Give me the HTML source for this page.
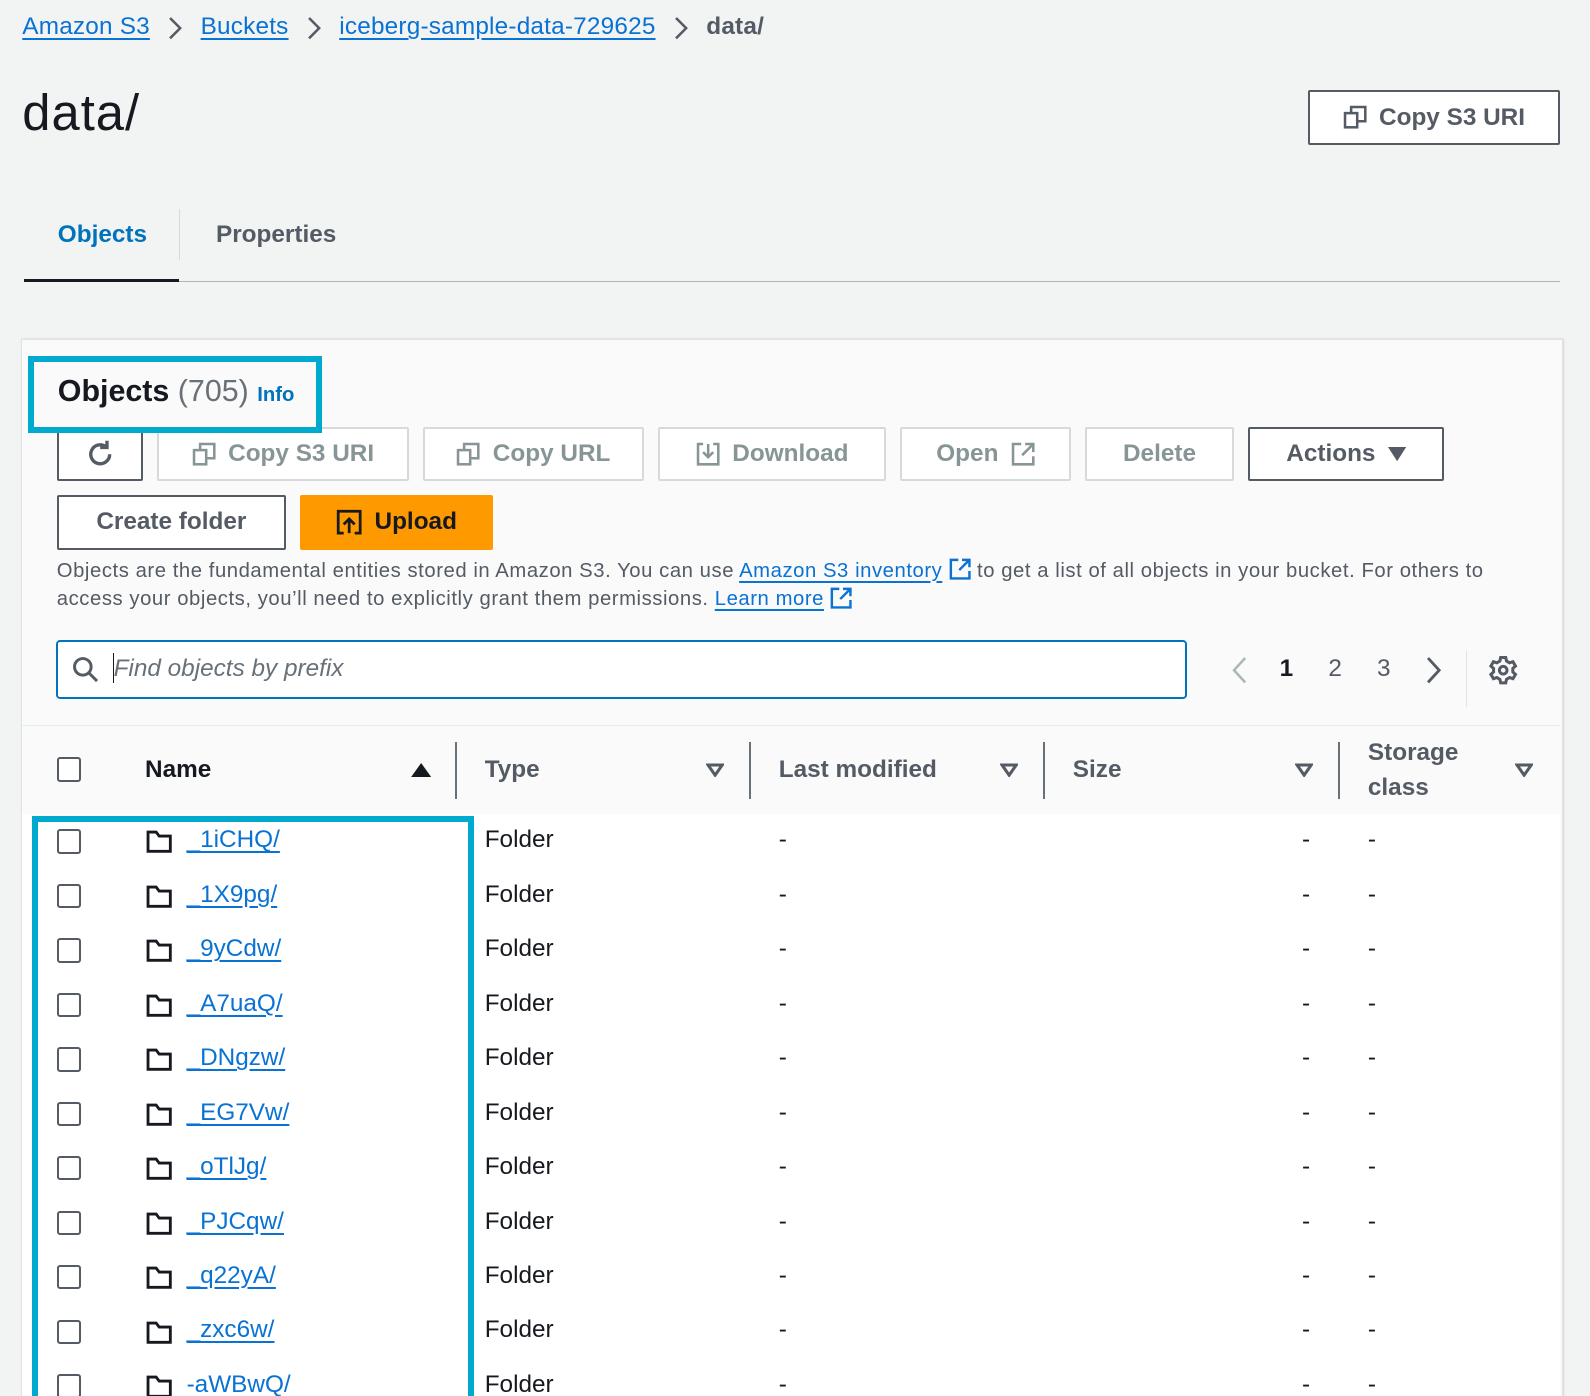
<!DOCTYPE html>
<html><head><meta charset="utf-8"><style>
html,body{margin:0;padding:0;background:#f2f3f3;overflow:hidden;width:1590px;height:1396px}
#w{zoom:1.014;position:relative;width:1568px;height:1377px;font-family:"Liberation Sans",sans-serif;color:#16191f}
.a{position:absolute;white-space:nowrap}
.lnk{color:#0972d3;text-decoration:underline;text-underline-offset:4px}
.btn{position:absolute;border:2px solid #d5dbdb;border-radius:2px;background:#fff;color:#879596;font-weight:bold;font-size:24px;box-sizing:border-box;display:flex;align-items:center;justify-content:center;gap:12px}
.btn.on{border-color:#545b64;color:#545b64}
.cb{position:absolute;left:56px;width:24px;height:24px;border:2px solid #545b64;border-radius:3px;background:#fff;box-sizing:border-box}
.row{position:absolute;left:22px;width:1516px;height:54px;border-bottom:1px solid #eaeded;background:#fff}
.hd{position:absolute;font-size:24px;font-weight:bold;color:#545b64}
.sep{position:absolute;width:2px;background:#687078;top:732px;height:56px}
.tri{position:absolute;top:752px}
.chev{display:inline-block;vertical-align:middle;margin:0 18px}
</style></head><body><div id="w">
<div class="a" style="left:22px;top:13px;font-size:24px;letter-spacing:0.2px"><span class="lnk">Amazon S3</span><svg class="chev" width="14" height="24" viewBox="0 0 14 24"><path d="M2 2l10 10L2 22" fill="none" stroke="#545b64" stroke-width="2.5"/></svg><span class="lnk">Buckets</span><svg class="chev" width="14" height="24" viewBox="0 0 14 24"><path d="M2 2l10 10L2 22" fill="none" stroke="#545b64" stroke-width="2.5"/></svg><span class="lnk">iceberg-sample-data-729625</span><svg class="chev" width="14" height="24" viewBox="0 0 14 24"><path d="M2 2l10 10L2 22" fill="none" stroke="#545b64" stroke-width="2.5"/></svg><span style="color:#545b64;font-weight:bold">data/</span></div>
<div class="a" style="left:22px;top:82px;font-size:50px;letter-spacing:1px">data/</div>
<div class="btn on" style="left:1290px;top:89px;width:248px;height:54px;color:#545b64"><svg width="24" height="24" viewBox="0 0 24 24" fill="none" stroke="#545b64" stroke-width="2.5"><rect x="2" y="8" width="12" height="14"/><path d="M8 8V2h14v14h-8"/></svg>Copy S3 URI</div>
<div class="a" style="left:57px;top:218px;font-size:24px;font-weight:bold;color:#0073bb">Objects</div>
<div class="a" style="left:177px;top:206px;width:1px;height:50px;background:#d5dbdb"></div>
<div class="a" style="left:213px;top:218px;font-size:24px;font-weight:bold;color:#545b64">Properties</div>
<div class="a" style="left:24px;top:277px;width:1514px;height:1px;background:#aab7b8"></div>
<div class="a" style="left:24px;top:275px;width:153px;height:3px;background:#16191f"></div>
<div class="a" style="left:21px;top:334px;width:1518px;height:1100px;background:#fafafa;border:1px solid #e1e4e4;box-shadow:1px 0 2px #ccc"></div>
<div class="a" style="left:57px;top:369px;font-size:30px;font-weight:bold">Objects <span style="font-weight:normal;color:#687078">(705)</span> <span style="font-size:20px;color:#0073bb">Info</span></div>
<div class="btn on" style="left:56px;top:421px;width:85px;height:53px"><svg width="32" height="32" viewBox="0 0 24 24" fill="none" stroke="#545b64" stroke-width="2.5"><path d="M19 12a7 7 0 1 1-3-5.7"/><path d="M17 2v5h-5"/></svg></div>
<div class="btn" style="left:155px;top:421px;width:248px;height:53px"><svg width="24" height="24" viewBox="0 0 24 24" fill="none" stroke="#879596" stroke-width="2.5"><rect x="2" y="8" width="12" height="14"/><path d="M8 8V2h14v14h-8"/></svg>Copy S3 URI</div>
<div class="btn" style="left:417px;top:421px;width:218px;height:53px"><svg width="24" height="24" viewBox="0 0 24 24" fill="none" stroke="#879596" stroke-width="2.5"><rect x="2" y="8" width="12" height="14"/><path d="M8 8V2h14v14h-8"/></svg>Copy URL</div>
<div class="btn" style="left:649px;top:421px;width:225px;height:53px"><svg width="24" height="24" viewBox="0 0 24 24" fill="none" stroke="#879596" stroke-width="2.5"><path d="M7 2H2v20h20V2h-5M12 2v12M7 10l5 5 5-5"/></svg>Download</div>
<div class="btn" style="left:888px;top:421px;width:168px;height:53px">Open <svg width="24" height="24" viewBox="0 0 24 24" fill="none" stroke="#879596" stroke-width="2.5"><path d="M10 2H2v20h20v-8M14 2h8v8M22 2L11 13"/></svg></div>
<div class="btn" style="left:1070px;top:421px;width:147px;height:53px">Delete</div>
<div class="btn on" style="left:1231px;top:421px;width:193px;height:53px">Actions <svg width="18" height="14" viewBox="0 0 18 14"><path d="M0 0h18L9 14z" fill="#545b64"/></svg></div>
<div class="btn on" style="left:56px;top:488px;width:226px;height:54px">Create folder</div>
<div class="btn" style="left:296px;top:488px;width:190px;height:54px;background:#ff9900;border-color:#ff9900;color:#16191f"><svg width="26" height="26" viewBox="0 0 24 24" fill="none" stroke="#16191f" stroke-width="2.5"><path d="M7 22H2V2h20v20h-5M12 22V9M7 14l5-5 5 5"/></svg>Upload</div>
<div class="a" style="left:56px;top:549px;font-size:20px;line-height:28px;color:#545b64;letter-spacing:0.55px">Objects are the fundamental entities stored in Amazon S3. You can use <span class="lnk">Amazon S3 inventory</span> <svg width="22" height="22" viewBox="0 0 24 24" style="vertical-align:-4px" fill="none" stroke="#0972d3" stroke-width="2.6"><path d="M10 2H2v20h20v-8M14 2h8v8M22 2L11 13"/></svg> to get a list of all objects in your bucket. For others to<br>access your objects, you’ll need to explicitly grant them permissions. <span class="lnk">Learn more</span> <svg width="22" height="22" viewBox="0 0 24 24" style="vertical-align:-4px" fill="none" stroke="#0972d3" stroke-width="2.6"><path d="M10 2H2v20h20v-8M14 2h8v8M22 2L11 13"/></svg></div>
<div class="a" style="left:55px;top:631px;width:1116px;height:58px;border:2px solid #0073bb;border-radius:4px;background:#fff;box-sizing:border-box"></div>
<svg class="a" style="left:70px;top:646px" width="28" height="28" viewBox="0 0 24 24" fill="none" stroke="#545b64" stroke-width="2.5"><circle cx="10" cy="10" r="7"/><path d="M15 15l7 7"/></svg>
<div class="a" style="left:112px;top:646px;font-size:24px;font-style:italic;color:#687078">Find objects by prefix</div>
<div class="a" style="left:111px;top:644px;width:1px;height:30px;background:#16191f"></div>
<svg class="a" style="left:1214px;top:647px" width="16" height="28" viewBox="0 0 16 28"><path d="M14 2L3 14l11 12" fill="none" stroke="#aab7b8" stroke-width="2.5"/></svg>
<div class="a" style="left:1262px;top:646px;font-size:24px;font-weight:bold">1</div>
<div class="a" style="left:1310px;top:646px;font-size:24px;color:#545b64">2</div>
<div class="a" style="left:1358px;top:646px;font-size:24px;color:#545b64">3</div>
<svg class="a" style="left:1406px;top:647px" width="16" height="28" viewBox="0 0 16 28"><path d="M2 2l11 12L2 26" fill="none" stroke="#545b64" stroke-width="2.8"/></svg>
<div class="a" style="left:1446px;top:642px;width:1px;height:55px;background:#e1e4e4"></div>
<svg class="a" style="left:1467px;top:646px" width="30" height="30" viewBox="0 0 24 24" fill="none" stroke="#545b64" stroke-width="2.4"><circle cx="12" cy="12" r="3"/><path d="M10 2h4l.6 2.8 2.4 1.4 2.7-.9 2 3.4-2.1 1.9v2.8l2.1 1.9-2 3.4-2.7-.9-2.4 1.4L14 22h-4l-.6-2.8-2.4-1.4-2.7.9-2-3.4 2.1-1.9v-2.8L2.3 8.7l2-3.4 2.7.9 2.4-1.4z"/></svg>
<div class="a" style="left:22px;top:715px;width:1516px;height:88px;background:#fafafa;border-top:1px solid #eaeded;border-bottom:1px solid #eaeded"></div>
<div class="cb" style="top:747px"></div>
<div class="hd" style="left:143px;top:746px;color:#16191f">Name</div>
<svg class="a" style="left:405px;top:752px" width="20" height="14"><path d="M0 14h20L10 0z" fill="#16191f"/></svg>
<div class="sep" style="left:449px"></div>
<div class="hd" style="left:478px;top:746px">Type</div>
<div class="sep" style="left:739px"></div>
<div class="hd" style="left:768px;top:746px">Last modified</div>
<div class="sep" style="left:1029px"></div>
<div class="hd" style="left:1058px;top:746px">Size</div>
<div class="sep" style="left:1320px"></div>
<div class="hd" style="left:1349px;top:726px;line-height:34px">Storage<br>class</div>
<svg class="tri" style="left:696px" width="18" height="14"><path d="M2 2h14L9 12z" fill="none" stroke="#545b64" stroke-width="3"/></svg>
<svg class="tri" style="left:986px" width="18" height="14"><path d="M2 2h14L9 12z" fill="none" stroke="#545b64" stroke-width="3"/></svg>
<svg class="tri" style="left:1277px" width="18" height="14"><path d="M2 2h14L9 12z" fill="none" stroke="#545b64" stroke-width="3"/></svg>
<svg class="tri" style="left:1494px" width="18" height="14"><path d="M2 2h14L9 12z" fill="none" stroke="#545b64" stroke-width="3"/></svg>
<div id="rows"></div>
<div class="a" style="left:28px;top:351px;width:290px;height:76px;border:6px solid #00a9ce;box-sizing:border-box"></div>
<div class="a" style="left:32px;top:805px;width:435px;height:580px;border:6px solid #00a9ce;box-sizing:border-box"></div>
</div>
<script>
var n=["_1iCHQ/","_1X9pg/","_9yCdw/","_A7uaQ/","_DNgzw/","_EG7Vw/","_oTlJg/","_PJCqw/","_q22yA/","_zxc6w/","-aWBwQ/"],h="";
n.forEach(function(s,i){var t=803+i*53.7;
h+='<div class="row" style="top:'+t+'px"></div><div class="cb" style="top:'+(t+15)+'px"></div>'+
'<svg class="a" style="left:144px;top:'+(t+15)+'px" width="26" height="24" viewBox="0 0 26 24" fill="none" stroke="#16191f" stroke-width="2.8"><path d="M2 3h8l3 4h11v15H2z"/></svg>'+
'<div class="a lnk" style="left:184px;top:'+(t+12)+'px;font-size:24px">'+s+'</div>'+
'<div class="a" style="left:478px;top:'+(t+12)+'px;font-size:24px">Folder</div>'+
'<div class="a" style="left:768px;top:'+(t+12)+'px;font-size:24px">-</div>'+
'<div class="a" style="left:1284px;top:'+(t+12)+'px;font-size:24px">-</div>'+
'<div class="a" style="left:1349px;top:'+(t+12)+'px;font-size:24px">-</div>';});
document.getElementById("rows").outerHTML=h;
</script>
</body></html>
